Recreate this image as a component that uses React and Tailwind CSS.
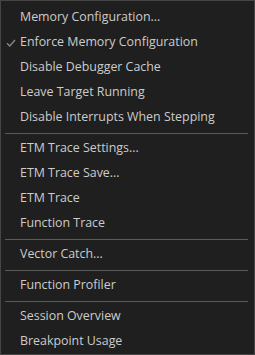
import React from "react";

const groups = [
  [
    { label: "Memory Configuration..." },
    { label: "Enforce Memory Configuration", checked: true },
    { label: "Disable Debugger Cache" },
    { label: "Leave Target Running" },
    { label: "Disable Interrupts When Stepping" },
  ],
  [
    { label: "ETM Trace Settings..." },
    { label: "ETM Trace Save..." },
    { label: "ETM Trace" },
    { label: "Function Trace" },
  ],
  [{ label: "Vector Catch..." }],
  [{ label: "Function Profiler" }],
  [{ label: "Session Overview" }, { label: "Breakpoint Usage" }],
];

const Check = () => (
  <svg width="10" height="10" viewBox="0 0 10 10" className="absolute left-[5px] top-[8px]">
    <path d="M1 5.2 L3.8 8 L9 2" fill="none" stroke="#8a8a8a" strokeWidth="1.3" />
  </svg>
);

export default function App() {
  return (
    <div
      className="w-[255px] h-[355px] bg-[#1f1f1f] border border-[#454545] pt-[4px] text-[12.4px] text-[#cccccc] overflow-hidden"
      style={{ fontFamily: '"Open Sans", "Noto Sans", sans-serif' }}
    >
      {groups.map((group, gi) => (
        <div key={gi}>
          {gi > 0 && (
            <div className="h-[6px] flex items-center ml-[4px] mr-[6px]">
              <div className="h-px w-full bg-[#5a5a5a]" />
            </div>
          )}
          {group.map((item) => (
            <div key={item.label} className="relative h-[25px] flex items-center pl-[19px] whitespace-nowrap">
              {item.checked && <Check />}
              {item.label}
            </div>
          ))}
        </div>
      ))}
    </div>
  );
}
